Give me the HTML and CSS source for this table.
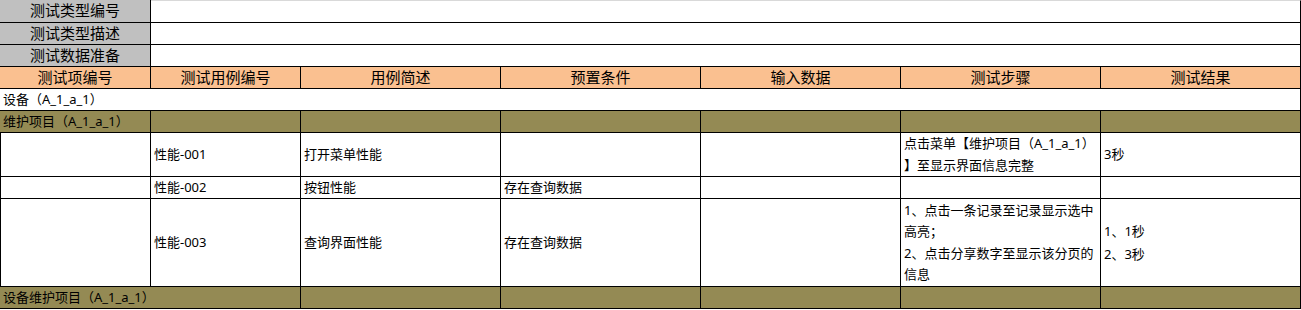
FILE: index.html
```html
<!DOCTYPE html>
<html lang="zh-CN">
<head>
<meta charset="utf-8">
<title>测试用例</title>
<link rel="stylesheet" href="styles.css">
</head>
<body>
<div class="sheet">
  <div class="c label first">测试类型编号</div>
  <div class="c value wide first"></div>
  <div class="c label">测试类型描述</div>
  <div class="c value wide"></div>
  <div class="c label">测试数据准备</div>
  <div class="c value wide"></div>

  <div class="c head">测试项编号</div>
  <div class="c head">测试用例编号</div>
  <div class="c head">用例简述</div>
  <div class="c head">预置条件</div>
  <div class="c head">输入数据</div>
  <div class="c head">测试步骤</div>
  <div class="c head">测试结果</div>

  <div class="c full">设备（A_1_a_1）</div>

  <div class="c olive">维护项目（A_1_a_1）</div>
  <div class="c olive"></div>
  <div class="c olive"></div>
  <div class="c olive"></div>
  <div class="c olive"></div>
  <div class="c olive"></div>
  <div class="c olive"></div>

  <div class="c edge"></div>
  <div class="c">性能-001</div>
  <div class="c">打开菜单性能</div>
  <div class="c"></div>
  <div class="c"></div>
  <div class="c multi">点击菜单【维护项目（A_1_a_1）<br>】至显示界面信息完整</div>
  <div class="c">3秒</div>

  <div class="c edge"></div>
  <div class="c">性能-002</div>
  <div class="c">按钮性能</div>
  <div class="c">存在查询数据</div>
  <div class="c"></div>
  <div class="c"></div>
  <div class="c"></div>

  <div class="c edge"></div>
  <div class="c">性能-003</div>
  <div class="c">查询界面性能</div>
  <div class="c">存在查询数据</div>
  <div class="c"></div>
  <div class="c multi">1、点击一条记录至记录显示选中<br>高亮；<br>2、点击分享数字至显示该分页的<br>信息</div>
  <div class="c multi res">1、1秒<br>2、3秒</div>

  <div class="c olive span2">设备维护项目（A_1_a_1）</div>
  <div class="c olive"></div>
  <div class="c olive"></div>
  <div class="c olive"></div>
  <div class="c olive"></div>
  <div class="c olive"></div>
</div>
</body>
</html>
```

FILE: styles.css
```css
html, body {
  margin: 0;
  padding: 0;
  background: #ffffff;
}

.sheet {
  display: grid;
  grid-template-columns: 151px 150px 200px 200px 200px 200px 200px;
  grid-template-rows: 23px 22px 22px 22px 22px 22px 44px 22px 88px 22px;
  font-family: "Noto Sans", "Noto Sans CJK SC", sans-serif;
  font-size: 13px;
  color: #000000;
}

.c {
  box-sizing: border-box;
  border-right: 1px solid #000000;
  border-bottom: 1px solid #000000;
  display: flex;
  align-items: center;
  padding-left: 3px;
  white-space: nowrap;
  overflow: visible;
  line-height: 21.5px;
}

.label {
  background: #c0c0c0;
  justify-content: center;
  padding-left: 0;
  font-size: 15px;
}

.value {
  background: #ffffff;
}

.wide {
  grid-column: span 6;
}

.value.first {
  border-top: 1px solid #d9d9d9;
}

.head {
  background: #fac090;
  justify-content: center;
  padding-left: 0;
  font-size: 15px;
}

.full {
  grid-column: span 7;
}

.olive {
  background: #948a54;
}

.span2 {
  grid-column: span 2;
}

.edge {
  border-left: 1px solid #000000;
}

.multi {
  white-space: normal;
}

.res {
  line-height: 22.5px;
}
```
